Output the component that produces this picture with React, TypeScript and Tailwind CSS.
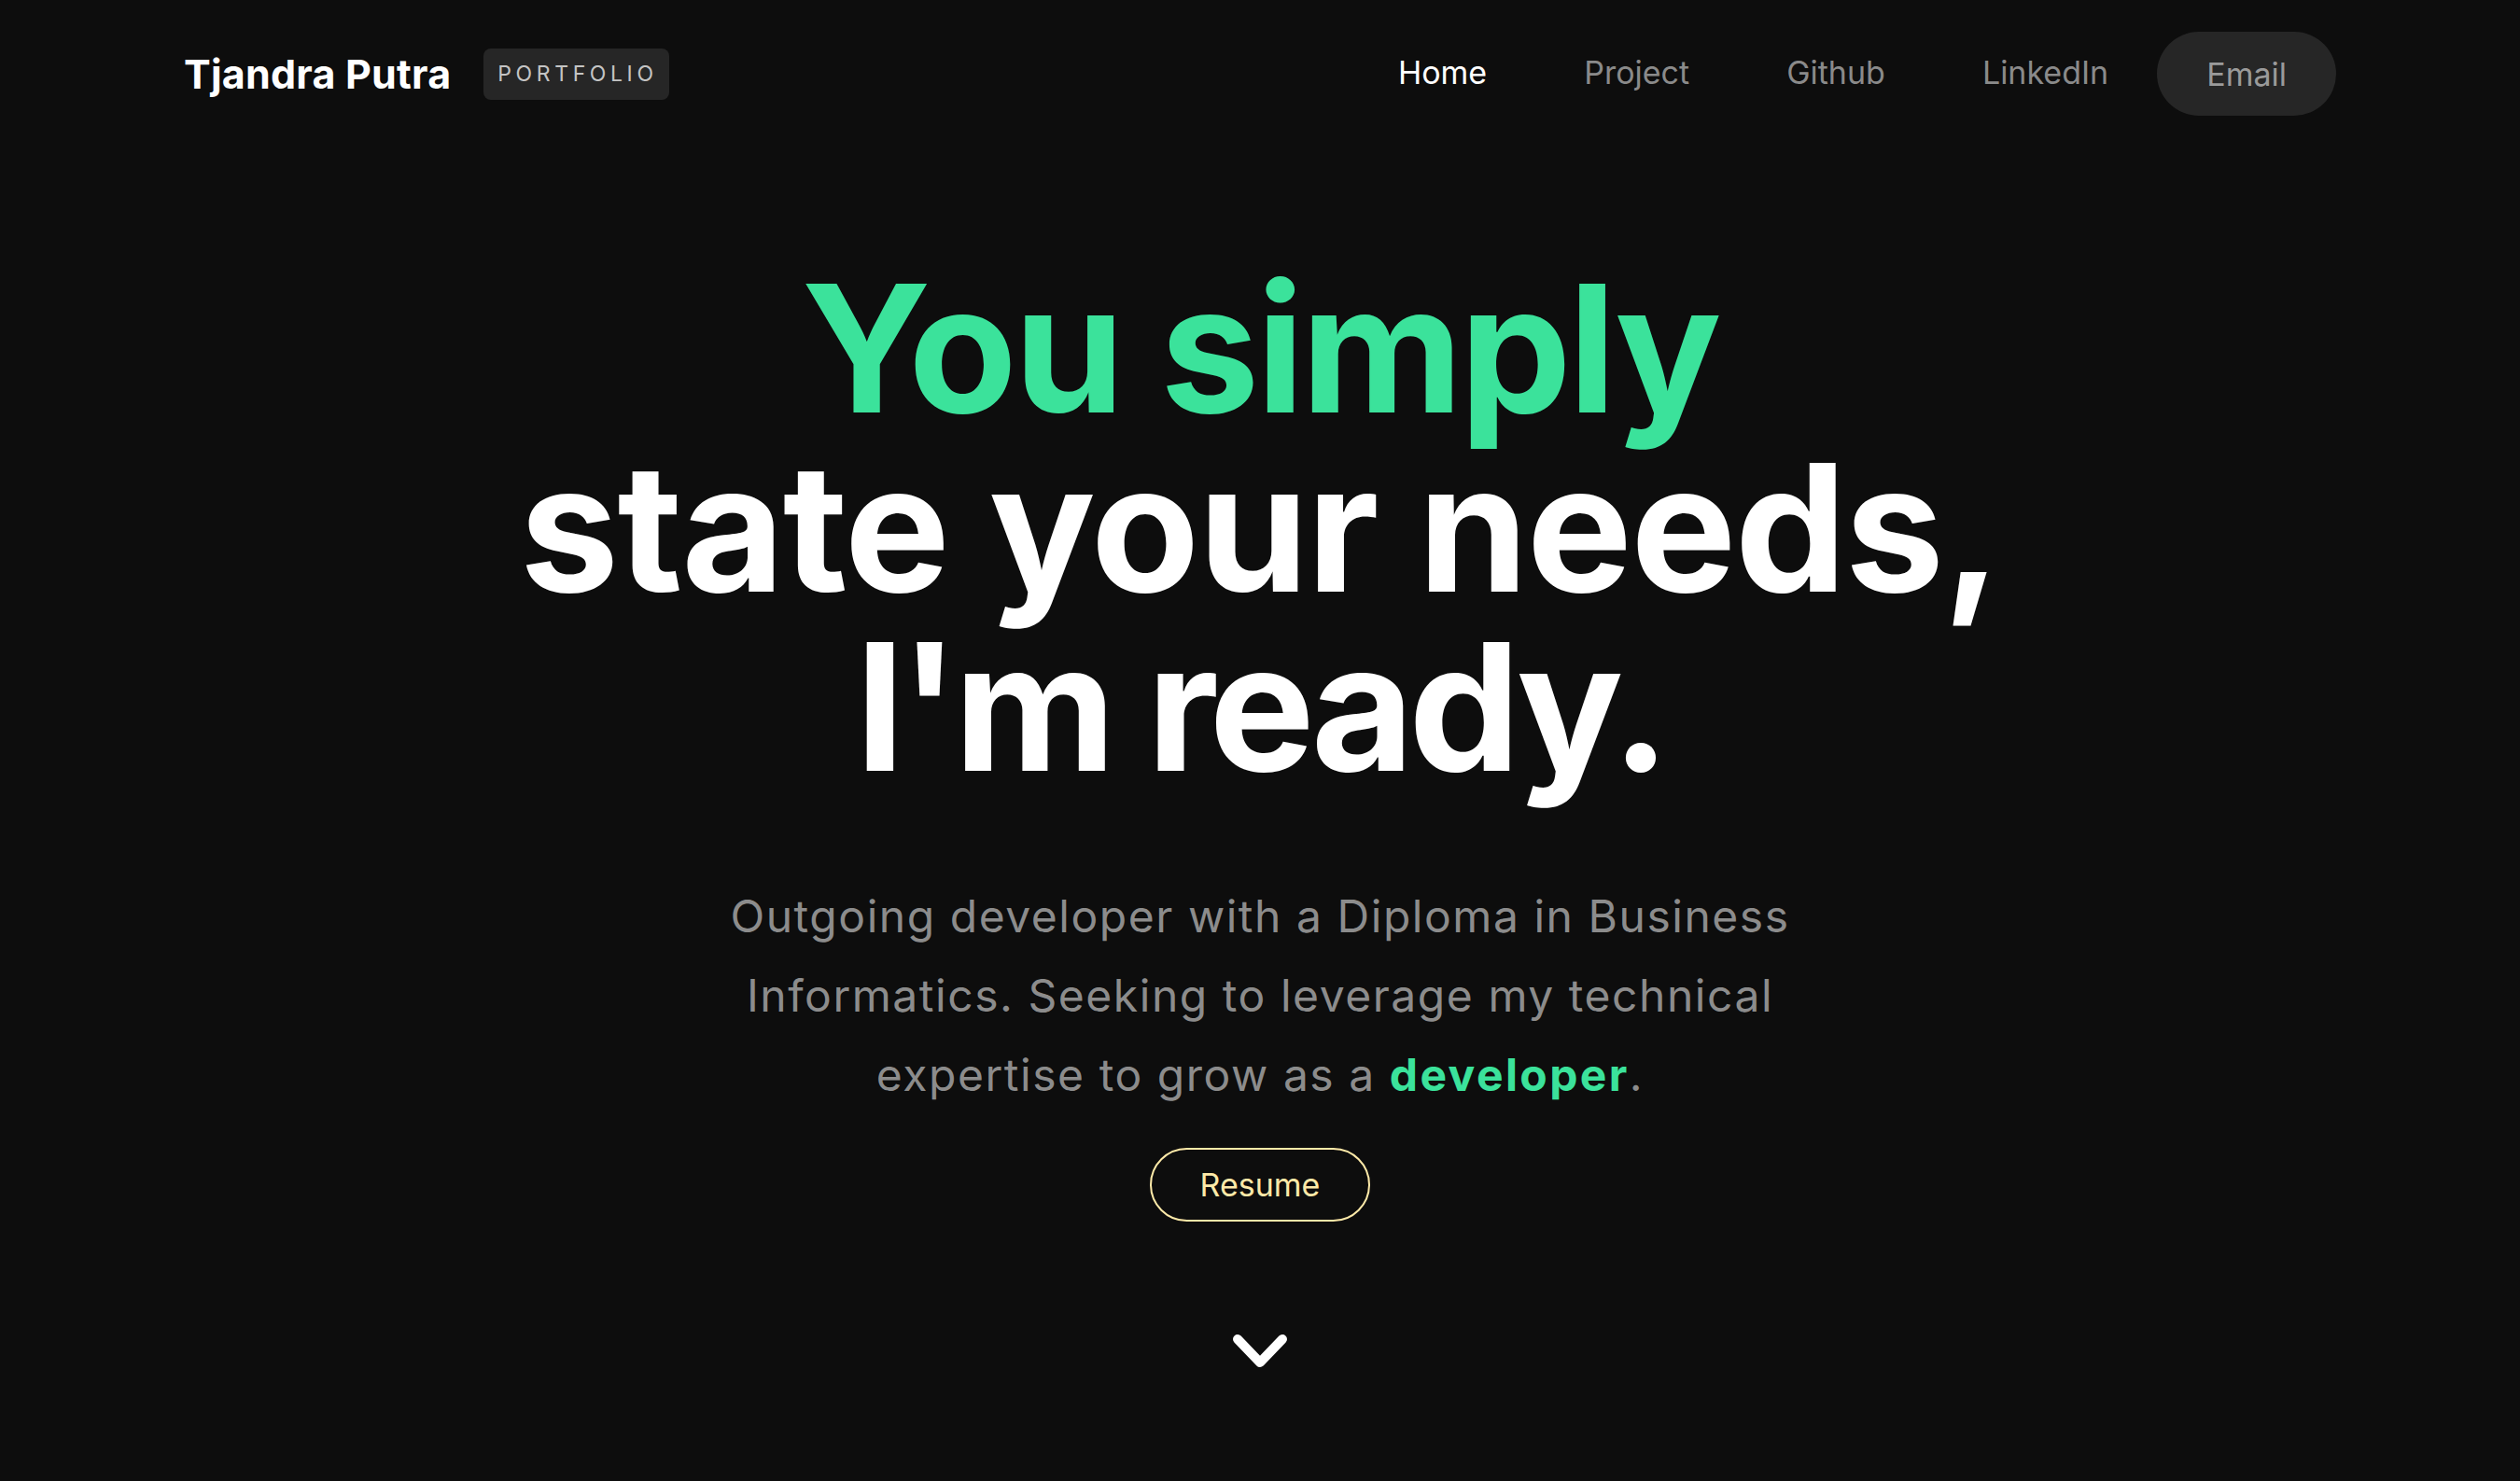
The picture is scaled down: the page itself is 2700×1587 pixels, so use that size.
import React from "react";

export default function App() {
  const navItem = "px-[52px] pb-[3px] text-[34px] leading-[40px] text-[#8a8a8a]";
  return (
    <div
      className="min-h-[1587px] w-full bg-[#0d0d0d] text-white"
      style={{ fontFamily: "Inter, 'Noto Sans', sans-serif" }}
    >
      <header className="flex h-[158px] items-center justify-between px-[197px]">
        <div className="flex items-center gap-[35px]">
          <span className="text-[43px] font-bold leading-none tracking-[0.005em] text-white">
            Tjandra Putra
          </span>
          <span className="flex h-[55px] items-center rounded-[8px] bg-[#262626] pl-[15px] pr-[12px] text-[23px] tracking-[0.2em] text-[#c4c4c4]">
            PORTFOLIO
          </span>
        </div>
        <nav className="flex items-center">
          <a className="px-[52px] pb-[3px] text-[34px] leading-[40px] text-white">Home</a>
          <a className={navItem}>Project</a>
          <a className={navItem}>Github</a>
          <a className={navItem}>LinkedIn</a>
          <a className="flex h-[90px] items-center rounded-full bg-[#262626] px-[53px] pt-[2px] text-[34px] leading-[40px] text-[#9a9a9a]">
            Email
          </a>
        </nav>
      </header>

      <main className="flex flex-col items-center">
        <h1 className="mt-[119px] text-center text-[190px] font-bold leading-[192px]">
          <span className="tracking-[-0.018em] text-[#3be29b]">You simply</span>
          <br />
          <span className="tracking-[-0.009em]">state your needs,</span>
          <br />
          <span className="tracking-[-0.031em]">I'm ready.</span>
        </h1>

        <p className="mt-[86px] text-center text-[48px] leading-[85px] tracking-[0.032em] text-[#8c8c8c]">
          Outgoing developer with a Diploma in Business
          <br />
          Informatics. Seeking to leverage my technical
          <br />
          expertise to grow as a{" "}
          <span className="font-bold tracking-[0.05em] text-[#3be29b]">developer</span>.
        </p>

        <button className="mt-[36px] flex h-[79px] w-[236px] items-center justify-center rounded-full border-2 border-[#fde9a8] text-[34px] text-[#fde9a8]">
          Resume
        </button>

        <div className="mt-[121px]">
          <svg width="58" height="36" viewBox="0 0 58 36" fill="none">
            <polyline
              points="5,5 29,30 53,5"
              stroke="white"
              strokeWidth="10"
              strokeLinecap="round"
              strokeLinejoin="round"
            />
          </svg>
        </div>
      </main>
    </div>
  );
}
